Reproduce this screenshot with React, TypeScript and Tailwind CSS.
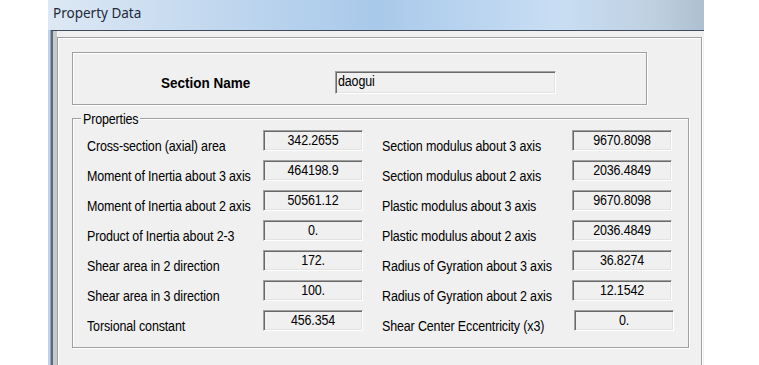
const rows = [
  ["Cross-section (axial) area", "342.2655", "Section modulus about 3 axis", "9670.8098"],
  ["Moment of Inertia about 3 axis", "464198.9", "Section modulus about 2 axis", "2036.4849"],
  ["Moment of Inertia about 2 axis", "50561.12", "Plastic modulus about 3 axis", "9670.8098"],
  ["Product of Inertia about 2-3", "0.", "Plastic modulus about 2 axis", "2036.4849"],
  ["Shear area in 2 direction", "172.", "Radius of Gyration about 3 axis", "36.8274"],
  ["Shear area in 3 direction", "100.", "Radius of Gyration about 2 axis", "12.1542"],
  ["Torsional constant", "456.354", "Shear Center Eccentricity (x3)", "0."],
];

const ValueBox = ({ value }: { value: string }) => (
  <div className="h-[21px] w-[100px] border border-t-[#a0a0a0] border-l-[#a0a0a0] border-b-white border-r-white shadow-[inset_1px_1px_0_#696969,inset_-1px_-1px_0_#e3e3e3] bg-[#f0f0f0] text-center leading-[19px]">
    <span className="inline-block scale-y-115">{value}</span>
  </div>
);

export default function App() {
  return (
    <div className="w-[759px] h-[365px] overflow-hidden bg-white font-['Liberation_Sans',Arial,sans-serif] text-[12.5px] tracking-[-0.15px] text-black">
      <div className="ml-[48px] w-[656px] flex flex-col">
        {/* title bar */}
        <div className="h-[30px] pl-[5px] pt-[4px] bg-[linear-gradient(to_right,#dde8f4_0%,#c2d8ef_25%,#a9c9ea_50%,#c9def4_78%,#bfd0e1_92%,#aebfd1_100%)] font-['Noto_Sans','Open_Sans',sans-serif] text-[13.5px] tracking-normal leading-[18px] text-[#1e2a38]">
          Property Data
        </div>
        <div className="flex">
          <div className="w-[2px] bg-[#bcd3ec]" />
          <div className="w-[1px] bg-[#8fa6bd]" />
          <div className="flex-1 flex border-t border-[#3f4b5b]">
            <div className="w-[2px] bg-[#5f6a78]" />
            <div className="w-[4px] bg-[#c9c9c9]" />
            <div className="flex-1 bg-[#f0f0f0] pt-[6px] pr-[2px] h-[340px]">
              {/* inner frame */}
              <div className="h-[340px] border border-[#a0a0a0] shadow-[inset_1px_1px_0_#fff,1px_1px_0_#fff] pl-[14px] pt-[14px]">
                {/* section name group */}
                <div className="w-[575px] h-[53px] border border-[#a0a0a0] shadow-[inset_1px_1px_0_#fff,1px_1px_0_#fff] flex pl-[88px] pt-[18px]">
                  <div className="w-[174px] pt-[5px] font-bold text-[13.5px] tracking-[0px] leading-[16px]">
                    <span className="inline-block scale-y-110">Section Name</span>
                  </div>
                  <div className="w-[221px] h-[23px] border border-t-[#a0a0a0] border-l-[#a0a0a0] border-b-white border-r-white shadow-[inset_1px_1px_0_#696969,inset_-1px_-1px_0_#e3e3e3] pl-[2px] pt-[2px] leading-[15px]">
                    <span className="inline-block scale-y-115">daogui</span>
                  </div>
                </div>
                {/* properties group */}
                <div className="relative mt-[13px] w-[617px] h-[230px] border border-[#a0a0a0] shadow-[inset_1px_1px_0_#fff,1px_1px_0_#fff] pl-[14px] pt-[11px]">
                  <div className="absolute left-[8px] top-[-7px] px-[2px] bg-[#f0f0f0] leading-[14px]">
                    <span className="inline-block scale-y-115">Properties</span>
                  </div>
                  <div className="flex flex-col">
                    {rows.map((r, i) => (
                      <div key={i} className="h-[30px] flex items-start">
                        <div className="w-[176px] pt-[9px] leading-[15px] whitespace-nowrap">
                          <span className="inline-block scale-y-115">{r[0]}</span>
                        </div>
                        <ValueBox value={r[1]} />
                        <div className="ml-[19px] w-[190px] pt-[9px] leading-[15px] whitespace-nowrap">
                          <span className="inline-block scale-y-115">{r[2]}</span>
                        </div>
                        <div className={i === 6 ? "ml-[2px]" : ""}>
                          <ValueBox value={r[3]} />
                        </div>
                      </div>
                    ))}
                  </div>
                </div>
              </div>
            </div>
          </div>
        </div>
      </div>
    </div>
  );
}
